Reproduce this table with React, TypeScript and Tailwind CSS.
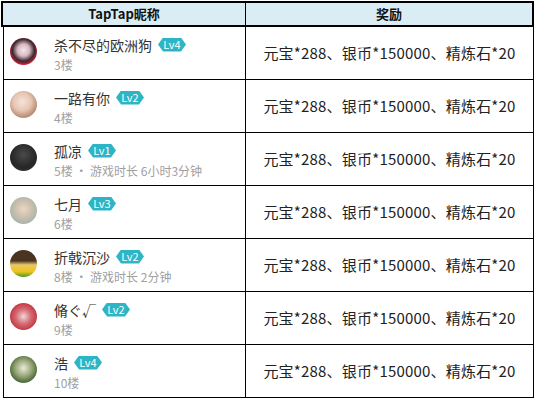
import React from "react";

type Row = {
  name: string;
  lv: number;
  floor: string;
  extra?: string;
  avatar: string;
};

const rows: Row[] = [
  { name: "杀不尽的欧洲狗", lv: 4, floor: "3楼", avatar: "bg-[radial-gradient(circle_at_50%_45%,#f4e6ea_0%,#d9b8c2_30%,#3a2a2e_55%,#e0203a_75%,#f5c0c8_100%)]" },
  { name: "一路有你", lv: 2, floor: "4楼", avatar: "bg-[radial-gradient(circle_at_45%_40%,#f6e3d9_0%,#e8c6b4_40%,#b88d78_70%,#efe6e6_100%)]" },
  { name: "孤凉", lv: 1, floor: "5楼", extra: "游戏时长 6小时3分钟", avatar: "bg-[radial-gradient(circle_at_50%_40%,#4a4a4a_0%,#262626_60%,#3a3a3a_100%)]" },
  { name: "七月", lv: 3, floor: "6楼", avatar: "bg-[radial-gradient(circle_at_50%_45%,#e8d8c8_0%,#cdbfae_40%,#a7b3ad_75%,#d5dcd8_100%)]" },
  { name: "折戟沉沙", lv: 2, floor: "8楼", extra: "游戏时长 2分钟", avatar: "bg-[linear-gradient(180deg,#4a3320_0%,#4a3320_40%,#e7c96a_55%,#f3c318_80%,#3f9a2f_100%)]" },
  { name: "脩ぐ√", lv: 2, floor: "9楼", avatar: "bg-[radial-gradient(circle_at_50%_50%,#f1d5d7_0%,#d46a73_40%,#c2323f_75%,#e9b0b5_100%)]" },
  { name: "浩", lv: 4, floor: "10楼", avatar: "bg-[radial-gradient(circle_at_50%_45%,#e9ecd8_0%,#9aa87a_40%,#4f6b3e_70%,#c8d8b0_100%)]" },
];

function Badge({ lv }: { lv: number }) {
  return (
    <span className="inline-flex h-[14px] w-[28px] items-center justify-center bg-[#2eb5c5] text-[11px] leading-none text-white [clip-path:polygon(18%_0,82%_0,100%_50%,82%_100%,18%_100%,0_50%)]">
      Lv{lv}
    </span>
  );
}

export default function App() {
  return (
    <div className="bg-white w-[537px] h-[401px] pt-px pl-px font-['Noto_Sans_CJK_SC','Microsoft_YaHei',sans-serif]">
      <div className="w-[533px]">
        {/* header */}
        <div className="flex h-[26px] border-2 border-black bg-[#daedf4] text-[13px] font-bold text-[#111]">
          <div className="flex w-[243px] items-center justify-center border-r border-black">TapTap昵称</div>
          <div className="flex flex-1 items-center justify-center">奖励</div>
        </div>

        {rows.map((r) => (
          <div key={r.name} className="flex h-[53px] border-x border-b border-black ml-[2px]">
            <div className="flex w-[242px] items-center border-r border-black pl-[6px]">
              <div className={`h-[27px] w-[27px] rounded-full shrink-0 mb-[4px] ${r.avatar}`} />
              <div className="ml-[17px] flex flex-col">
                <div className="flex items-center gap-[6px] text-[14px] leading-[20px] text-[#333]">
                  <span>{r.name}</span>
                  <Badge lv={r.lv} />
                </div>
                <div className="mt-[2px] text-[12px] leading-[15px] text-[#a0a0a0]">
                  {r.floor}
                  {r.extra && <span> · {r.extra}</span>}
                </div>
              </div>
            </div>
            <div className="flex flex-1 items-center justify-center text-[15px] tracking-[0.2px] text-[#222]">
              元宝*288、银币*150000、精炼石*20
            </div>
          </div>
        ))}
      </div>
    </div>
  );
}
